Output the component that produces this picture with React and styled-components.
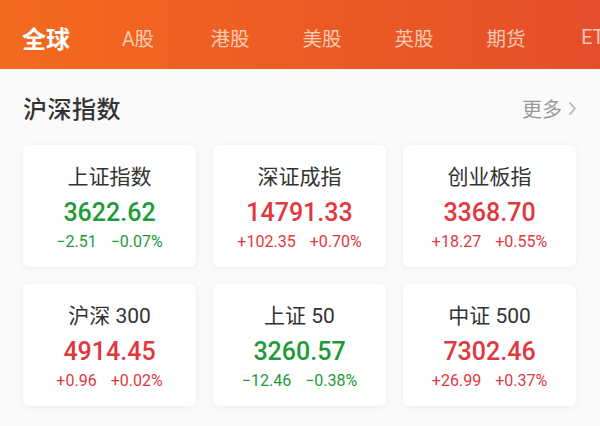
import React from "react";
import styled, { createGlobalStyle } from "styled-components";

const Global = createGlobalStyle`
  html, body { margin: 0; padding: 0; background: #fafafa; }
  body { font-family: "Roboto", "Noto Sans CJK SC", sans-serif; width: 600px; height: 426px; overflow: hidden; }
`;

const Page = styled.div`
  width: 600px;
  height: 426px;
  background: #fafafa;
  display: flex;
  flex-direction: column;
`;

const TabBar = styled.div`
  height: 69px;
  flex: none;
  background: linear-gradient(90deg, #f46a1e 0%, #ec5c24 50%, #e44e2b 100%);
  display: flex;
  align-items: center;
  overflow: hidden;
  white-space: nowrap;
  padding-top: 5px;
  box-sizing: border-box;
`;

const Tab = styled.div`
  flex: none;
  width: 92px;
  text-align: center;
  font-size: ${(p) => (p.$active ? "24px" : "19.5px")};
  font-weight: ${(p) => (p.$active ? 700 : 400)};
  color: ${(p) => (p.$active ? "#ffffff" : "rgba(255,235,220,0.78)")};
`;

const Section = styled.div`
  padding: 22px 23px 0 23px;
  display: flex;
  flex-direction: column;
`;

const SectionHead = styled.div`
  display: flex;
  align-items: center;
  justify-content: space-between;
  height: 32px;
`;

const SectionTitle = styled.div`
  font-size: 24px;
  font-weight: 500;
  color: #333;
  letter-spacing: 0.5px;
`;

const More = styled.div`
  display: flex;
  align-items: center;
  gap: 6px;
  font-size: 20px;
  color: #9a9a9a;
  margin-top: 3px;
`;

const Grid = styled.div`
  margin-top: 22px;
  display: grid;
  grid-template-columns: repeat(3, 173px);
  column-gap: 17px;
  row-gap: 17px;
`;

const Card = styled.div`
  height: 122px;
  background: #fff;
  border-radius: 6px;
  box-shadow: 0 1px 6px rgba(0, 0, 0, 0.06);
  display: flex;
  flex-direction: column;
  align-items: center;
  padding-top: 17px;
  box-sizing: border-box;
`;

const Name = styled.div`
  font-size: 21px;
  color: #333;
  line-height: 30px;
`;

const Value = styled.div`
  font-size: 25px;
  font-weight: 500;
  line-height: 34px;
  margin-top: 4px;
  color: ${(p) => (p.$up ? "#e0383e" : "#1e9a36")};
`;

const Change = styled.div`
  display: flex;
  gap: 14px;
  font-size: 16px;
  line-height: 22px;
  margin-top: 1px;
  color: ${(p) => (p.$up ? "#e0383e" : "#1e9a36")};
`;

const tabs = ["全球", "A股", "港股", "美股", "英股", "期货", "ETF"];

const data = [
  { name: "上证指数", value: "3622.62", diff: "−2.51", pct: "−0.07%", up: false },
  { name: "深证成指", value: "14791.33", diff: "+102.35", pct: "+0.70%", up: true },
  { name: "创业板指", value: "3368.70", diff: "+18.27", pct: "+0.55%", up: true },
  { name: "沪深 300", value: "4914.45", diff: "+0.96", pct: "+0.02%", up: true },
  { name: "上证 50", value: "3260.57", diff: "−12.46", pct: "−0.38%", up: false },
  { name: "中证 500", value: "7302.46", diff: "+26.99", pct: "+0.37%", up: true },
];

export default function App() {
  return (
    <Page>
      <Global />
      <TabBar>
        {tabs.map((t, i) => (
          <Tab key={t} $active={i === 0}>{t}</Tab>
        ))}
      </TabBar>
      <Section>
        <SectionHead>
          <SectionTitle>沪深指数</SectionTitle>
          <More>
            更多
            <svg width="9" height="15" viewBox="0 0 9 15">
              <path d="M1.5 1.5 L7 7.5 L1.5 13.5" fill="none" stroke="#b0b0b0" strokeWidth="1.5" />
            </svg>
          </More>
        </SectionHead>
        <Grid>
          {data.map((d) => (
            <Card key={d.name}>
              <Name>{d.name}</Name>
              <Value $up={d.up}>{d.value}</Value>
              <Change $up={d.up}>
                <span>{d.diff}</span>
                <span>{d.pct}</span>
              </Change>
            </Card>
          ))}
        </Grid>
      </Section>
    </Page>
  );
}
